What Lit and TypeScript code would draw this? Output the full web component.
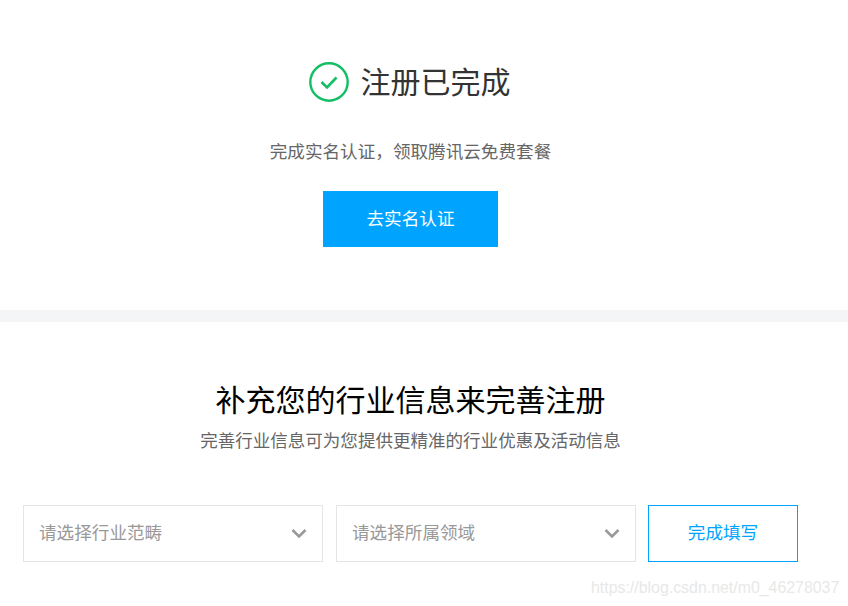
import { LitElement, html, css } from "lit";
import { customElement } from "lit/decorators.js";

@customElement("app-root")
export class AppRoot extends LitElement {
  static styles = css`
    :host {
      display: block;
      position: relative;
      width: 848px;
      height: 606px;
      overflow: hidden;
      background: #fff;
      font-family: "Noto Sans CJK SC", "Liberation Sans", sans-serif;
    }
    .done {
      width: 821px;
      height: 310px;
      padding-top: 61px;
      box-sizing: border-box;
      display: flex;
      flex-direction: column;
      align-items: center;
    }
    .done-title {
      display: flex;
      align-items: center;
      gap: 12px;
      height: 42px;
      font-size: 30px;
      line-height: 38px;
      color: #333;
    }
    .done-title svg { display: block; }
    .done-title span { padding-bottom: 4px; margin-right: 2px; }
    .done-sub {
      margin-top: 36px;
      font-size: 17.6px;
      line-height: 24px;
      color: #666;
    }
    .go {
      margin-top: 28px;
      width: 175px;
      height: 56px;
      border: none;
      padding: 0 0 4px;
      background: #00a4ff;
      color: #fff;
      font: inherit;
      font-size: 17.6px;
    }
    .band { height: 12px; background: #f4f5f7; }
    .extra {
      width: 821px;
      display: flex;
      flex-direction: column;
      align-items: center;
    }
    .extra-title {
      margin-top: 55px;
      font-size: 30px;
      line-height: 42px;
      color: #000;
    }
    .extra-sub {
      margin-top: 9px;
      font-size: 17.55px;
      line-height: 24px;
      color: #666;
    }
    .form {
      margin-top: 53px;
      align-self: flex-start;
      padding-left: 23px;
      display: flex;
    }
    .select {
      width: 300px;
      height: 57px;
      box-sizing: border-box;
      border: 1px solid #e5e5e5;
      padding: 0 15px 5px 15px;
      margin-right: 13px;
      display: flex;
      align-items: center;
      justify-content: space-between;
      font-size: 17.6px;
      color: #999;
    }
    .select svg { margin-top: 5px; }
    .select + .select { margin-right: 12px; }
    .submit {
      width: 150px;
      height: 57px;
      box-sizing: border-box;
      border: 1px solid #00a4ff;
      padding: 0 0 5px;
      background: #fff;
      color: #00a4ff;
      font: inherit;
      font-size: 17.6px;
    }
    .watermark {
      position: absolute;
      left: 591px;
      top: 578px;
      font-family: "Liberation Sans", sans-serif;
      font-size: 15.9px;
      line-height: 20px;
      color: #e8e8e8;
      white-space: nowrap;
    }
  `;

  private chevron() {
    return html`<svg width="16" height="11" viewBox="0 0 16 11" fill="none">
      <path d="M1.5 2 L8 8.5 L14.5 2" stroke="#999" stroke-width="2.6" />
    </svg>`;
  }

  render() {
    return html`
      <section class="done">
        <div class="done-title">
          <svg width="40" height="40" viewBox="0 0 40 40" fill="none">
            <circle cx="20" cy="20" r="18.7" stroke="#13bf64" stroke-width="2.4" />
            <path d="M12.5 20 L18 25.5 L27.5 15.5" stroke="#13bf64" stroke-width="2.6" />
          </svg>
          <span>注册已完成</span>
        </div>
        <div class="done-sub">完成实名认证，领取腾讯云免费套餐</div>
        <button class="go">去实名认证</button>
      </section>
      <div class="band"></div>
      <section class="extra">
        <div class="extra-title">补充您的行业信息来完善注册</div>
        <div class="extra-sub">完善行业信息可为您提供更精准的行业优惠及活动信息</div>
        <div class="form">
          <div class="select"><span>请选择行业范畴</span>${this.chevron()}</div>
          <div class="select"><span>请选择所属领域</span>${this.chevron()}</div>
          <button class="submit">完成填写</button>
        </div>
      </section>
      <div class="watermark">https://blog.csdn.net/m0_46278037</div>
    `;
  }
}
